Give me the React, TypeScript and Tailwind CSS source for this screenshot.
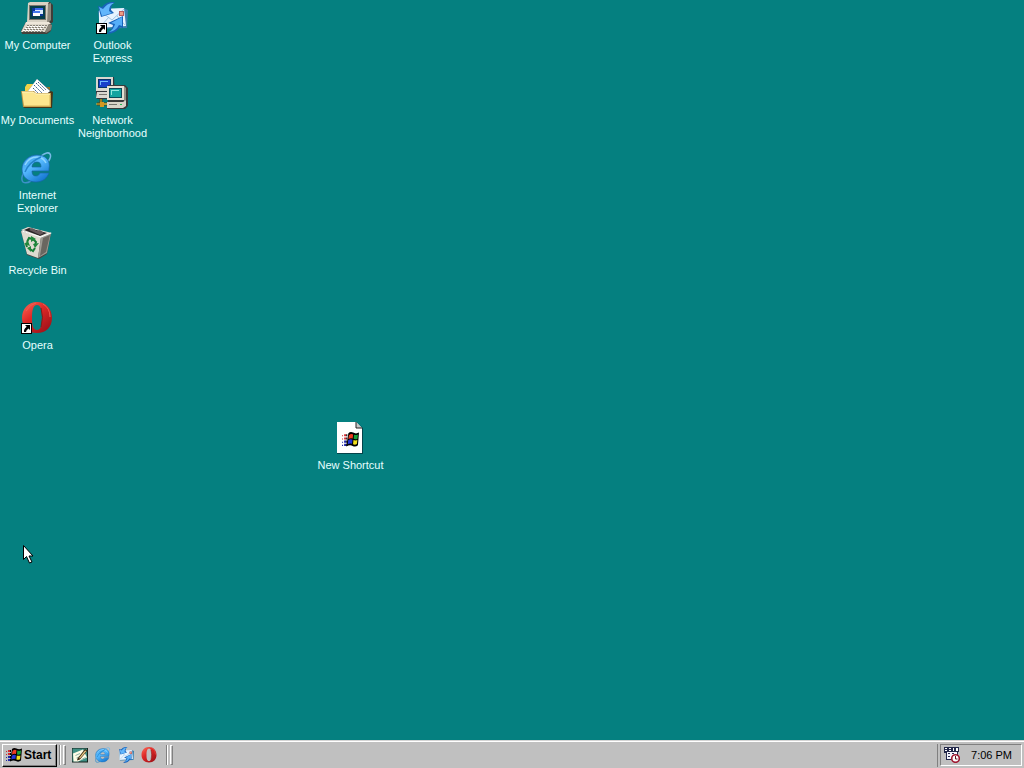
import type { ReactNode } from "react";

function WindowsFlag() {
  return (
    <>
      <path d="M6 2Q8 .3 10.5 1.500Q13 3 16 1.500L15 13.500Q12.500 15.500 10 14Q7.500 12.600 4 14.500Z" fill="#000" />
      <path d="M6.500 4Q8.500 2.200 10.500 3.200L10 7Q8 6.200 6 7.600Z" fill="#f03a20" />
      <path d="M11.300 3.500Q13 4.300 15 3.400L14.600 7.300Q12.800 8.200 11 7.400Z" fill="#19a03a" />
      <path d="M5.800 8.700Q8 7.300 9.900 8.200L9.400 12Q7.500 11.400 5.300 12.600Z" fill="#2334d8" />
      <path d="M10.800 8.500Q12.800 9.200 14.500 8.400L14 12.300Q12.300 13.300 10.400 12.500Z" fill="#f2df1c" />
      <path d="M0 4h1v1H0zM2 3h2v2H2zM0 7h1v1H0zM2 6h2v2H2z" fill="#d02a30" />
      <path d="M0 10h1v1H0zM2 9h2v2H2zM0 13h1v1H0zM2 12h2v2H2z" fill="#2028a8" />
      <path d="M4 3h1v2H4zM4 6h1v2H4zM4 9h1v2H4zM4 12h1v2H4z" fill="#000" />
    </>
  );
}

function ShortcutArrow() {
  return (
    <>
      <path d="M0 21h11v11H0z" fill="#000" />
      <path d="M1 22h9v9H1z" fill="#fff" />
      <path d="M4 23h5v5L7.500 26.500Q5 28 5 30H3Q2.500 27 5.700 24.700Z" fill="#000" />
    </>
  );
}

function ComputerArt() {
  return (
    <>
      <path d="M8 0h21l3 3v17l-5 4H9z" fill="#403d38" />
      <path d="M7 1l2-1h19l-1 2v18H6z" fill="#d8d2c4" />
      <path d="M27 2l3-1v17l-4 4z" fill="#8c877b" />
      <path d="M8 3h17v15H8z" fill="#79766c" />
      <path d="M9 4h15v13H9z" fill="#053d49" />
      <path d="M11 6h11v8H11z" fill="#0a3597" />
      <path d="M14 6h8v6h-8z" fill="#dcecff" />
      <path d="M14 6h8v2h-8z" fill="#3c68ed" />
      <path d="M12 9h7v5h-7z" fill="#fff" />
      <path d="M12 9h7v2h-7z" fill="#4479ed" />
      <path d="M5 20h23l3 3-1 6-4 3H1l-1-3z" fill="#45413b" />
      <path d="M5 20h23l2 2H4z" fill="#eee7da" />
      <path d="M4 22h24l-4 8H0z" fill="#ddd7ca" />
      <path d="M28 22l3 1-1 5-5 3-1-1z" fill="#898478" />
      <path d="M6 23.500h20M5 25.500h20M3 27.500h20M2 29.500h20" fill="none" stroke="#858177" strokeDasharray="2 1" />
      <path d="M6 24.500h18M4 26.500h18M2 28.500h18" fill="none" stroke="#fff" strokeDasharray="2 1" />
    </>
  );
}

function MailArt() {
  return (
    <>
      <path d="M2 9l25-3 5 2-1 18-27 1z" fill="#397fae" />
      <path d="M3 7l25-1 2 18-27 2z" fill="#e6f3ff" />
      <path d="M4 9l12 9 12-11M4 25l9-10M29 23l-8-9" fill="none" stroke="#9ec4e4" />
      <path d="M23 9h5v5h-5z" fill="#b45b60" />
      <path d="M24 10h3v3h-3z" fill="#ed9d84" />
      <path d="M19 0Q15 2 15 8l3 3-13 4L2 4l4 1Q11-1 19 0Z" fill="#1963b9" />
      <path d="M18 1Q13 3 13 9l3 2-10 3L3 5l4 2Q12 0 18 1Z" fill="#62b6fc" />
      <path d="M10 32Q16 29 17 23l-5-2 15-7v12l-3-1Q20 32 10 32Z" fill="#1963b9" />
      <path d="M13 30Q18 27 19 22l-4-1 11-6v9l-3-1Q20 29 13 30Z" fill="#56aef8" />
    </>
  );
}

function DocumentsArt() {
  return (
    <>
      <path d="M5 9l2-2h7l2 3h13v21H4z" fill="#947325" />
      <path d="M4 10l2-3h7l3 3v7H4z" fill="#f1d148" />
      <path d="M7 14l9-12 14 12-4 7H12z" fill="#365879" />
      <path d="M7 14l9-12 13 12-6 6z" fill="#fff" />
      <path d="M13 8l8 8M15 6l8 8M12 11l6 6M17 5l8 8" stroke="#395c87" fill="none" strokeDasharray="2 1" />
      <path d="M2 31h29l1-16-2-1z" fill="#473516" />
      <path d="M0 14h13l2 2h15v14H2z" fill="#bd9545" />
      <path d="M1 15h11l3 2h14v12H3z" fill="#fce68e" />
      <path d="M1 15h11l3 2h14" fill="none" stroke="#fff5bd" />
      <path d="M3 29h26V18" fill="none" stroke="#d5b45a" />
    </>
  );
}

function NetworkArt() {
  return (
    <>
      <path d="M1 0h17l1 18-2 4H1l-1-3V1z" fill="#35373b" />
      <path d="M0 0h17v14H0zM1 15h16v6H0z" fill="#d9d7cf" />
      <path d="M2 2h13v9H2z" fill="#063467" />
      <path d="M3 3h11v7H3z" fill="#193fca" />
      <path d="M4 4h8v1H5v3H4z" fill="#71b8ff" />
      <path d="M3 17h8v1H3z" fill="#77766f" />
      <path d="M5 22v5h12M1 27h12" stroke="#594313" strokeWidth="3" fill="none" />
      <path d="M5 22v5h11M0 27h12" stroke="#dfb635" strokeWidth="1" fill="none" />
      <path d="M4 25h4v5H4z" fill="#d39920" />
      <path d="M12 8h17l3 3v18l-3 3H11l1-9z" fill="#383b3a" />
      <path d="M11 9h17v14H11z" fill="#e5e0d4" />
      <path d="M28 9l2 2v12l-2 2z" fill="#919086" />
      <path d="M13 11h13v10H13z" fill="#0b4c59" />
      <path d="M14 12h11v8H14z" fill="#12a4a0" />
      <path d="M15 13h8v1h-7v4h-1z" fill="#8de7de" />
      <path d="M11 25h16l3-2v6l-3 2H11z" fill="#d7d4c8" />
      <path d="M13 27h8v1h-8z" fill="#72736b" />
      <path d="M24 27h2v1h-2z" fill="#21b74a" />
    </>
  );
}

function ExplorerArt() {
  return (
    <>
      <defs>
        <linearGradient id="explorer-blue" x2="0.7" y2="1">
          <stop stopColor="#3290df" />
          <stop offset=".45" stopColor="#58bbff" />
          <stop offset="1" stopColor="#1476d1" />
        </linearGradient>
      </defs>
      <path d="M20 4Q27-1 29 2q2 3-3 9" fill="none" stroke="#77b9e5" strokeWidth="1.500" />
      <path d="M4 17Q-1 27 2 30q3 2 8-1" fill="none" stroke="#3e91c9" strokeWidth="1.500" />
      <path d="M28 17C30 8 24 3 16 3 8 3 1 9 1 17s6 13 14 13c7 0 11-4 13-9h-9c-1 2-2 3-4 3-3 0-4-2-4-5h17Zm-17-2c0-3 2-5 5-5s4 2 4 5Z" fill="url(#explorer-blue)" stroke="#1764a8" strokeWidth=".7" />
      <path d="M4 13Q8 5 16 5q6 0 9 6" fill="none" stroke="#8dd5ff" strokeWidth="1.500" />
      <path d="M4 20Q8 10 20 5" fill="none" stroke="#2584cc" strokeWidth="1.500" />
    </>
  );
}

function RecycleArt() {
  return (
    <>
      <path d="M0 4L7 0l23 6-4 21-8 5-12-4Z" fill="#494743" />
      <path d="M0 3l7-3 24 6-11 5Z" fill="#e1dfd6" />
      <path d="M3 3l5-2 18 5-7 3Z" fill="#292326" />
      <path d="M8 3l3-2 5 3 3-1 4 3-4 2Z" fill="#65575a" />
      <path d="M0 4l20 6-3 21-11-4Z" fill="#dedbd0" />
      <path d="M20 10l10-4-4 20-9 5Z" fill="#9c9b93" />
      <path d="M22 11l7-3-4 17-6 4Z" fill="#696660" />
      <path d="M1 4l19 6 10-4" fill="none" stroke="#fff" />
      <path d="M6 15l2-4 3 1M12 12l3 3-1 3M14 21l-2 3-3-2M6 20l-1-3" fill="none" stroke="#177e35" strokeWidth="2" />
      <path d="M10 9l5 3-5 3ZM12 17l6-1-4 5ZM10 19v6l-4-4ZM3 17l4-3 2 5Z" fill="#20873c" />
    </>
  );
}

function OperaArt() {
  return (
    <>
      <defs>
        <linearGradient id="opera-red" x2="0.8" y2="1">
          <stop stopColor="#ff6b58" />
          <stop offset=".45" stopColor="#dd2927" />
          <stop offset="1" stopColor="#9e1118" />
        </linearGradient>
      </defs>
      <path fillRule="evenodd" d="M16 0C7 0 1 7 1 16s6 15 15 15 15-6 15-15S25 0 16 0Zm0 3c4 0 5 6 5 13s-1 12-5 12-5-5-5-12 1-13 5-13Z" fill="url(#opera-red)" />
      <path d="M5 9Q9 2 15 1M22 2q7 4 7 13" fill="none" stroke="#ef5d50" />
      <path d="M20 6q3 9 0 19" fill="none" stroke="#851b18" />
    </>
  );
}

function ShortcutDocumentArt() {
  return (
    <>
      <path d="M3 0h19l7 6v26H3z" fill="#05434a" />
      <path d="M3 0h19l6 6v25H3z" fill="#fff" />
      <path d="M22 0v6h6z" fill="#c8c8c8" />
      <path d="M22 0v6h6" fill="none" stroke="#222" />
      <svg x="8" y="9" width="17" height="17" viewBox="0 0 16 16"><WindowsFlag /></svg>
    </>
  );
}

function Art({ children, small = false }: { children: ReactNode; small?: boolean }) {
  return (
    <svg aria-hidden="true" viewBox="0 0 32 32" className={small ? "size-4 shrink-0" : "mr-px size-8 shrink-0"}>
      {children}
    </svg>
  );
}

function DesktopIcon({ label, children }: { label: string; children: ReactNode }) {
  return (
    <button type="button" className="flex w-[75px] flex-col items-center gap-[5px] pt-0.5 text-[11px] leading-[13px] text-[#e5ffff]">
      <Art>{children}</Art>
      <span className="w-full whitespace-pre-line text-center">{label}</span>
    </button>
  );
}

function DeskPadArt() {
  return (
    <>
      <path d="M0 2h32v29H0z" fill="#18251f" />
      <path d="M1 3h29v26H1z" fill="#3f8f84" />
      <path d="M2 13L22 5l8 16-18 8H3Z" fill="#fffde7" />
      <path d="M7 17l9-4M9 22l7-3M19 25l8-4" stroke="#8fb3a6" strokeWidth="2" />
      <path d="M11 23L26 4l5 3-15 18-6 2Z" fill="#3d2b15" />
      <path d="M14 22L26 7l3 1-13 15Z" fill="#e9c984" />
    </>
  );
}

function Divider() {
  return (
    <div aria-hidden="true" className="flex h-5 gap-0.5">
      <div className="w-0.5 border-l border-r border-l-[#808080] border-r-white" />
      <div className="w-[3px] border border-b-[#808080] border-l-white border-r-[#808080] border-t-white" />
    </div>
  );
}

function QuickLaunch({ label, children }: { label: string; children: ReactNode }) {
  return (
    <button type="button" aria-label={label} className="flex h-[23px] w-[23px] items-center">
      <Art small>{children}</Art>
    </button>
  );
}

function SchedulerArt() {
  return (
    <svg aria-hidden="true" viewBox="0 0 16 16" className="size-4">
      <path d="M0 0h15v5h-1v8H2V6H0z" fill="#22284a" />
      <path d="M3 5h10v7H3z" fill="#f5f5ff" />
      <path d="M1 1h2v1H1zM1 3h2v1H1zM5 1h2v1H5zM5 3h2v1H5zM9 1h1v3H9zM12 1h2v3h-2z" fill="#fff" />
      <path d="M4 6h2v1H4zM8 6h2v1H8zM4 9h2v1H4z" fill="#22284a" />
      <circle cx="11.500" cy="11.500" r="3.800" fill="#fff" stroke="#a01831" strokeWidth="1.600" />
      <path d="M11.500 9v3h2" fill="none" stroke="#571321" />
    </svg>
  );
}

export default function App() {
  return (
    <div className="flex min-h-screen cursor-default flex-col bg-[#058080] font-['Liberation_Sans',Arial,sans-serif] select-none">
      <main className="relative flex-1 overflow-hidden">
        <div className="grid w-max grid-flow-col grid-rows-[repeat(5,75px)] items-start">
          <DesktopIcon label="My Computer"><ComputerArt /></DesktopIcon>
          <DesktopIcon label="My Documents"><DocumentsArt /></DesktopIcon>
          <DesktopIcon label={"Internet\nExplorer"}><ExplorerArt /></DesktopIcon>
          <DesktopIcon label="Recycle Bin"><RecycleArt /></DesktopIcon>
          <DesktopIcon label="Opera"><OperaArt /><ShortcutArrow /></DesktopIcon>
          <DesktopIcon label={"Outlook\nExpress"}><MailArt /><ShortcutArrow /></DesktopIcon>
          <DesktopIcon label={"Network\nNeighborhood"}><NetworkArt /></DesktopIcon>
        </div>
        <div className="absolute left-[313px] top-[420px]">
          <DesktopIcon label="New Shortcut"><ShortcutDocumentArt /></DesktopIcon>
        </div>
        <svg aria-hidden="true" viewBox="0 0 12 20" className="absolute left-[23px] top-[545px] h-5 w-3">
          <path d="M.5.5v14l3-3 3 6.500 2.500-1-3-6H10Z" fill="#fff" stroke="#000" />
        </svg>
      </main>
      <footer className="flex h-7 items-center border-t border-[#d4d4d4] bg-[#c0c0c0] px-0.5 pt-px text-black shadow-[inset_0_1px_0_#fff]">
        <button type="button" className="flex h-[23px] w-[55px] items-center gap-0.5 border border-b-black border-l-white border-r-black border-t-white px-[3px] text-xs font-bold shadow-[inset_-1px_-1px_0_#808080]">
          <svg aria-hidden="true" viewBox="0 0 16 16" className="size-4 shrink-0"><WindowsFlag /></svg>
          Start
        </button>
        <div className="flex flex-1 items-center pl-0.5">
          <Divider />
          <nav aria-label="Quick Launch" className="flex pl-[6px] pr-0.5">
            <QuickLaunch label="Show Desktop"><DeskPadArt /></QuickLaunch>
            <QuickLaunch label="Internet Explorer"><ExplorerArt /></QuickLaunch>
            <QuickLaunch label="Outlook Express"><MailArt /></QuickLaunch>
            <QuickLaunch label="Opera"><OperaArt /></QuickLaunch>
          </nav>
          <Divider />
        </div>
        <div className="ml-1 h-[23px] border-l border-[#808080]" />
        <div className="ml-0.5 flex h-[22px] items-center gap-[11px] border border-b-white border-l-[#808080] border-r-white border-t-[#808080] pl-[3px] pr-[9px] text-[11px]">
          <SchedulerArt />
          <time>7:06 PM</time>
        </div>
      </footer>
    </div>
  );
}
